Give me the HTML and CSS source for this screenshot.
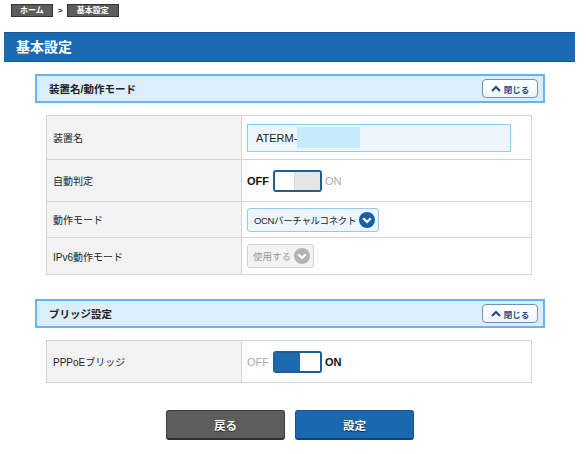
FILE: index.html
```html
<!DOCTYPE html>
<html lang="ja">
<head>
<meta charset="utf-8">
<link rel="stylesheet" href="styles.css">
</head>
<body>
<div class="crumbs">
  <span class="crumb">ホーム</span>
  <span class="sep">&gt;</span>
  <span class="crumb">基本設定</span>
</div>
<div class="titlebar">基本設定</div>

<div class="section">
  <div class="sechead">
    <span class="sectitle">装置名/動作モード</span>
    <span class="closebtn"><svg class="caret" viewBox="0 0 10 7" width="10" height="7"><path d="M1 6 L5 2 L9 6" fill="none" stroke="#1d4f88" stroke-width="2.2"/></svg>閉じる</span>
  </div>
  <div class="table">
    <div class="row r1">
      <div class="lab">装置名</div>
      <div class="val"><div class="input">ATERM-<span class="mask"></span></div></div>
    </div>
    <div class="row r2">
      <div class="lab">自動判定</div>
      <div class="val">
        <span class="st on">OFF</span>
        <span class="switch off"><span class="knob"></span><span class="track"></span></span>
        <span class="st dim">ON</span>
      </div>
    </div>
    <div class="row r3">
      <div class="lab">動作モード</div>
      <div class="val">
        <div class="select">OCNバーチャルコネクト<svg class="chev" viewBox="0 0 16 16" width="16" height="16"><circle cx="8" cy="8" r="8" fill="#1a5ea6"/><path d="M4.2 6.3 L8 10 L11.8 6.3" fill="none" stroke="#fff" stroke-width="2.3"/></svg></div>
      </div>
    </div>
    <div class="row r4">
      <div class="lab">IPv6動作モード</div>
      <div class="val">
        <div class="select disabled">使用する<svg class="chev" viewBox="0 0 16 16" width="16" height="16"><circle cx="8" cy="8" r="8" fill="#b4b4b4"/><path d="M4.2 6.3 L8 10 L11.8 6.3" fill="none" stroke="#fff" stroke-width="2.3"/></svg></div>
      </div>
    </div>
  </div>
</div>

<div class="section s2">
  <div class="sechead">
    <span class="sectitle">ブリッジ設定</span>
    <span class="closebtn"><svg class="caret" viewBox="0 0 10 7" width="10" height="7"><path d="M1 6 L5 2 L9 6" fill="none" stroke="#1d4f88" stroke-width="2.2"/></svg>閉じる</span>
  </div>
  <div class="table">
    <div class="row r5">
      <div class="lab">PPPoEブリッジ</div>
      <div class="val">
        <span class="st dim">OFF</span>
        <span class="switch onstate"><span class="track"></span><span class="knob"></span></span>
        <span class="st on">ON</span>
      </div>
    </div>
  </div>
</div>

<div class="buttons">
  <span class="btn back">戻る</span>
  <span class="btn ok">設定</span>
</div>
</body>
</html>
```
FILE: styles.css
```css
* { box-sizing: border-box; }
body {
  margin: 0;
  background: #fff;
  font-family: "Liberation Sans", "Noto Sans CJK JP", sans-serif;
  color: #222;
  width: 586px;
  height: 454px;
  overflow: hidden;
}
.crumbs {
  display: flex;
  align-items: center;
  padding: 4px 0 0 11px;
  height: 17px;
}
.crumb {
  display: inline-block;
  height: 13px;
  line-height: 11px;
  padding: 0 4px;
  background: #5d5d5d;
  border: 1px solid #333;
  color: #fff;
  font-size: 8px;
  font-weight: bold;
  text-align: center;
  white-space: nowrap;
}
.crumb:first-child { width: 42px; }
.crumb:last-child { width: 52px; }
.sep {
  font-size: 8px;
  font-weight: bold;
  margin: 0 4px 0 5px;
  color: #222;
}
.titlebar {
  margin: 15px 11px 0 4px;
  height: 30px;
  background: #1a6bb3;
  border-top: 1px solid #15579a;
  border-bottom: 1px solid #15579a;
  color: #fff;
  font-size: 14px;
  font-weight: bold;
  padding-left: 12px;
  line-height: 28px;
}
.section {
  margin: 12px 0 0 35px;
  width: 510px;
}
.section.s2 { margin-top: 24px; }
.sechead {
  height: 29px;
  background: #dcedfc;
  border: 2px solid #66b3f0;
  display: flex;
  align-items: center;
  justify-content: space-between;
  padding: 0 5px 0 12px;
}
.sectitle {
  font-size: 10.5px;
  font-weight: bold;
  color: #222;
}
.closebtn {
  width: 56px;
  height: 19px;
  border: 1px solid #6d93ba;
  border-radius: 4px;
  background: linear-gradient(#ffffff, #f1f5f9);
  display: flex;
  align-items: center;
  justify-content: center;
  font-size: 8.5px;
  font-weight: bold;
  color: #1d4f88;
  gap: 3px;
}
.caret { display: block; }
.table {
  margin: 12px 0 0 11px;
  width: 486px;
  border: 1px solid #d4d4d4;
}
.row {
  display: grid;
  grid-template-columns: 195px 1fr;
  border-top: 1px solid #d4d4d4;
}
.row:first-child { border-top: none; }
.r1 { height: 43px; }
.r2 { height: 42px; }
.r3 { height: 36px; }
.r4 { height: 37px; }
.r5 { height: 41px; }
.lab {
  background: #f3f3f3;
  border-right: 1px solid #d4d4d4;
  font-size: 10px;
  color: #222;
  display: flex;
  align-items: center;
  padding-left: 6px;
}
.val {
  display: flex;
  align-items: center;
  padding-left: 5px;
  background: #fff;
}
.input {
  width: 264px;
  height: 28px;
  background: #eef6fd;
  border: 1px solid #8fcaf2;
  display: flex;
  align-items: center;
  padding-left: 8px;
  font-size: 11px;
  color: #222;
}
.mask {
  display: inline-block;
  width: 63px;
  height: 21px;
  background: #c6ebfc;
}
.st {
  font-size: 11px;
  font-weight: bold;
}
.st.on { color: #111; }
.st.dim { color: #aaa; font-weight: normal; }
.switch {
  display: flex;
  width: 49px;
  height: 22px;
  border: 2px solid #1d5d9b;
  border-radius: 3px;
  overflow: hidden;
  margin: 0 3px 0 4px;
}
.switch .knob { width: 20px; background: #fff; }
.switch .track { flex: 1; background: #e6e6e6; }
.switch.off .knob { border-right: 1px solid #d8d8d8; }
.switch.onstate .track { background: #1d6ab1; }
.select {
  height: 24px;
  border: 1px solid #8fcaf2;
  background: #eef6fd;
  border-radius: 3px;
  display: flex;
  align-items: center;
  padding: 0 3px 0 6px;
  font-size: 9.5px;
  letter-spacing: -0.35px;
  color: #222;
  gap: 3px;
  white-space: nowrap;
}
.select.disabled {
  background: #f3f3f3;
  border-color: #cfcfcf;
  color: #999;
  padding-left: 5px;
  letter-spacing: 0;
}
.chev { display: block; flex: none; }
.buttons {
  display: flex;
  gap: 10px;
  margin: 27px 0 0 166px;
}
.btn {
  width: 119px;
  height: 30px;
  border-radius: 3px;
  color: #fff;
  font-size: 11.5px;
  font-weight: bold;
  display: flex;
  align-items: center;
  justify-content: center;
  text-shadow: 0 1px 1px rgba(0,0,0,0.6);
}
.btn.back {
  background: #5d5d5d;
  border: 1px solid #3c3c3c;
  border-bottom: 2px solid #2e2e2e;
}
.btn.ok {
  background: #1a69b0;
  border: 1px solid #14548e;
  border-bottom: 2px solid #0f4478;
}
```
